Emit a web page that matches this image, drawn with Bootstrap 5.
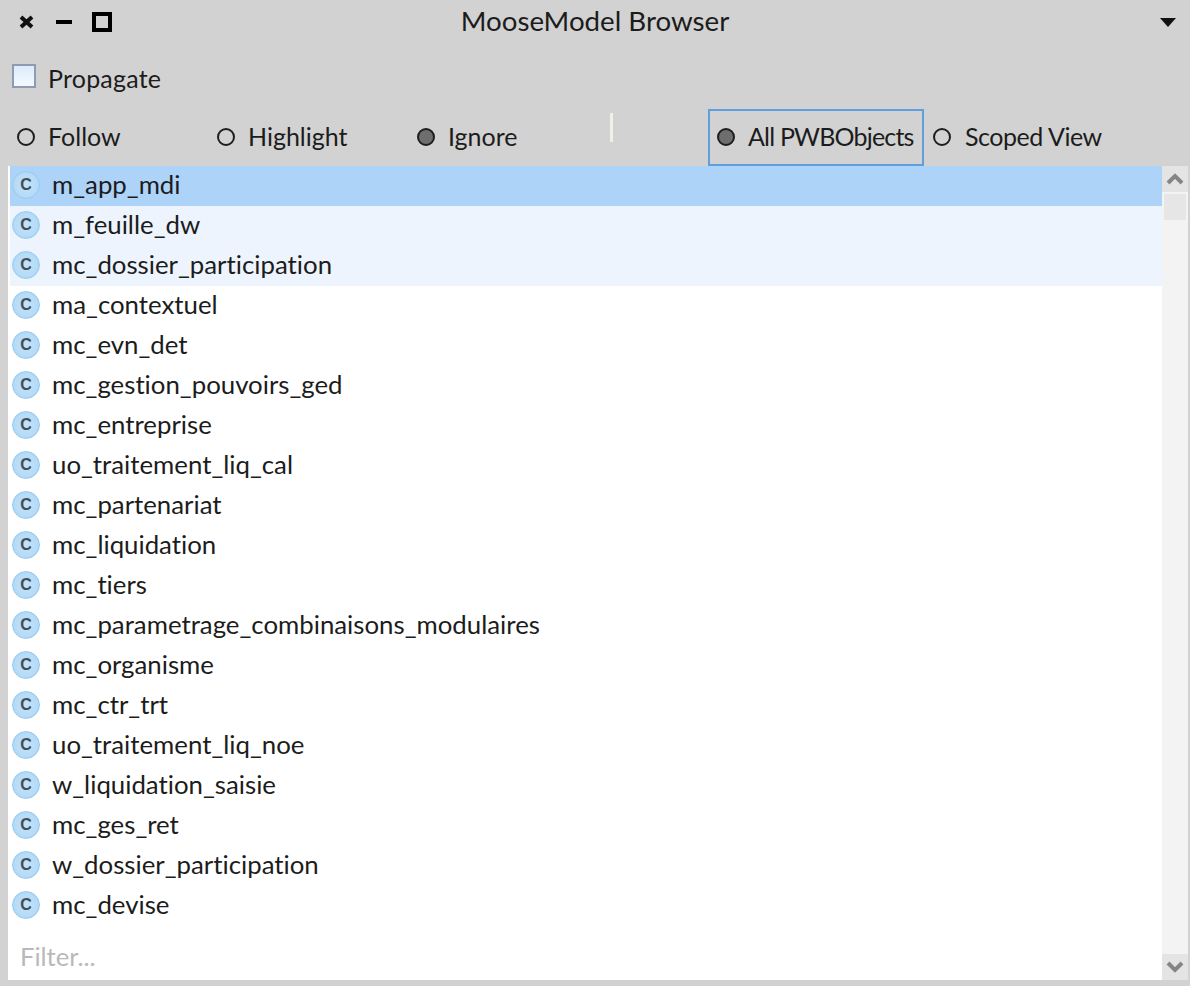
<!DOCTYPE html>
<html lang="en">
<head>
  <meta charset="UTF-8">
  <title>MooseModel Browser</title>
  <link rel="stylesheet" href="https://cdn.jsdelivr.net/npm/bootstrap@5.3.0/dist/css/bootstrap.min.css">
  <style>
    html, body {
      height: 986px;
      overflow: hidden;
    }
    body {
      background: #d2d2d2;
      color: #1c1c1c;
      font-family: "Lato", "Liberation Sans", sans-serif;
      font-size: 25px;
      line-height: 30px;
      font-variant-ligatures: none;
      white-space: nowrap;
    }
    .win-bar {
      height: 44px;
      padding: 0 14px 0 19px;
    }
    .win-title {
      left: 0;
      right: 0;
      top: 6px;
      text-align: center;
      font-size: 27.7px;
    }
    .win-btns {
      gap: 21px;
    }
    .win-btns svg:last-child {
      margin-left: -1px;
    }
    .propagate-row {
      height: 64px;
      padding-left: 12px;
      gap: 12px;
    }
    .propagate-row .tight-label {
      position: relative;
      top: 2px;
      letter-spacing: .2px;
    }
    .check-box {
      width: 24px;
      height: 24px;
      border: 2px solid #8d9bb4;
      background: linear-gradient(#dcecfb, #f4faff);
    }
    .radio-row {
      height: 58px;
      padding-left: 17px;
    }
    .radio-item {
      gap: 13px;
      height: 57px;
    }
    .radio-item span:last-child {
      margin-top: -2px;
    }
    .radio-dot {
      width: 18px;
      height: 18px;
      border: 2px solid #1e1e1e;
      border-radius: 50%;
    }
    .radio-dot.is-on {
      background: #6e6e6e;
    }
    .col-follow { width: 200px; }
    .col-highlight { width: 200px; }
    .col-ignore { width: 193px; }
    .sep-bar {
      width: 3px;
      height: 29px;
      background: #f0f0ea;
      margin-top: -20px;
      margin-right: 95px;
    }
    .focus-box {
      width: 216px;
      padding-left: 7px;
      border: 2px solid #5f9fdf;
      margin-right: 9px;
    }
    .narrow-label {
      letter-spacing: -.45px;
    }
    .focus-box .narrow-label {
      letter-spacing: -.8px;
    }
    .scoped-item {
      gap: 14px;
    }
    .main-pane {
      margin-left: 8px;
      width: 1180px;
      height: 814px;
      background: #fff;
    }
    .list-col {
      width: 1154px;
      padding-left: 2px;
    }
    .list-rows {
      height: 774px;
    }
    .item-row {
      height: 40px;
      gap: 12px;
      padding-left: 2px;
      border: 0;
      border-radius: 0;
      background: transparent;
      color: #1c1c1c;
      font-size: 25.8px;
    }
    .item-row span:last-child {
      margin-top: -4px;
    }
    .item-row.is-sel {
      background: #aed3f8;
    }
    .item-row.is-alt {
      background: #edf4fd;
    }
    .class-icon {
      width: 28px;
      height: 28px;
      margin-top: -2px;
      border-radius: 50%;
      background: radial-gradient(circle at 50% 50%, #c4e1f9 0, #b6dcf8 60%, #8fc7f0 100%);
      border: 1px solid #9accf0;
      color: #444b52;
      font-family: "Liberation Sans", sans-serif;
      font-size: 16px;
      font-weight: 700;
      line-height: 1;
    }
    .filter-box {
      height: 40px;
      padding-left: 10px;
      padding-bottom: 8px;
      color: #b9b9b9;
      font-size: 25.6px;
    }
    .scroll-col {
      width: 26px;
      background: #f3f3f3;
    }
    .scroll-btn {
      height: 26px;
      background: #e4e4e4;
    }
    .scroll-thumb {
      width: 22px;
      height: 26px;
      margin: 2px auto 0;
      background: #e6e6e6;
    }
  </style>
</head>
<body>
  <div class="win-bar d-flex align-items-center justify-content-between position-relative">
    <div class="win-btns d-flex align-items-center">
      <svg width="16" height="16" viewBox="0 0 16 16"><path d="M2 3 L13 13 M13 3 L2 13" stroke="#111" stroke-width="4"/></svg>
      <svg width="16" height="16" viewBox="0 0 16 16"><path d="M0 8 H16" stroke="#000" stroke-width="4"/></svg>
      <svg width="20" height="20" viewBox="0 0 20 20"><rect x="2" y="2" width="16" height="16" fill="none" stroke="#000" stroke-width="4"/></svg>
    </div>
    <div class="win-title position-absolute">MooseModel Browser</div>
    <svg width="16" height="9" viewBox="0 0 16 9"><path d="M0 0 H16 L8 9 Z" fill="#111"/></svg>
  </div>

  <div class="propagate-row d-flex align-items-center">
    <span class="check-box"></span>
    <span class="tight-label">Propagate</span>
  </div>

  <div class="radio-row d-flex align-items-center">
    <div class="radio-item col-follow d-flex align-items-center"><span class="radio-dot"></span><span>Follow</span></div>
    <div class="radio-item col-highlight d-flex align-items-center"><span class="radio-dot"></span><span>Highlight</span></div>
    <div class="radio-item col-ignore d-flex align-items-center"><span class="radio-dot is-on"></span><span>Ignore</span></div>
    <span class="sep-bar"></span>
    <div class="radio-item focus-box d-flex align-items-center"><span class="radio-dot is-on"></span><span class="narrow-label">All PWBObjects</span></div>
    <div class="radio-item scoped-item d-flex align-items-center"><span class="radio-dot"></span><span class="narrow-label">Scoped View</span></div>
  </div>

  <div class="main-pane d-flex">
    <div class="list-col d-flex flex-column">
      <div class="list-group list-rows" id="classList"></div>
      <div class="filter-box d-flex align-items-center">Filter...</div>
    </div>
    <div class="scroll-col d-flex flex-column">
      <div class="scroll-btn d-flex align-items-center justify-content-center">
        <svg width="18" height="12" viewBox="0 0 18 12"><path d="M2 10 L9 3 L16 10" fill="none" stroke="#858585" stroke-width="4"/></svg>
      </div>
      <div class="scroll-thumb"></div>
      <div class="flex-grow-1"></div>
      <div class="scroll-btn d-flex align-items-center justify-content-center">
        <svg width="18" height="12" viewBox="0 0 18 12"><path d="M2 2 L9 9 L16 2" fill="none" stroke="#858585" stroke-width="4"/></svg>
      </div>
    </div>
  </div>

  <script src="https://cdn.jsdelivr.net/npm/bootstrap@5.3.0/dist/js/bootstrap.bundle.min.js"></script>
  <script>
    const classNames = [
      'm_app_mdi', 'm_feuille_dw', 'mc_dossier_participation', 'ma_contextuel', 'mc_evn_det',
      'mc_gestion_pouvoirs_ged', 'mc_entreprise', 'uo_traitement_liq_cal', 'mc_partenariat',
      'mc_liquidation', 'mc_tiers', 'mc_parametrage_combinaisons_modulaires', 'mc_organisme',
      'mc_ctr_trt', 'uo_traitement_liq_noe', 'w_liquidation_saisie', 'mc_ges_ret',
      'w_dossier_participation', 'mc_devise'
    ];
    const list = document.getElementById('classList');
    classNames.forEach((name, i) => {
      const row = document.createElement('div');
      row.className = 'item-row d-flex align-items-center';
      if (i === 0) row.classList.add('is-sel');
      if (i === 1 || i === 2) row.classList.add('is-alt');
      row.innerHTML = `<span class="class-icon d-flex align-items-center justify-content-center">C</span><span>${name}</span>`;
      list.appendChild(row);
    });
  </script>
</body>
</html>
